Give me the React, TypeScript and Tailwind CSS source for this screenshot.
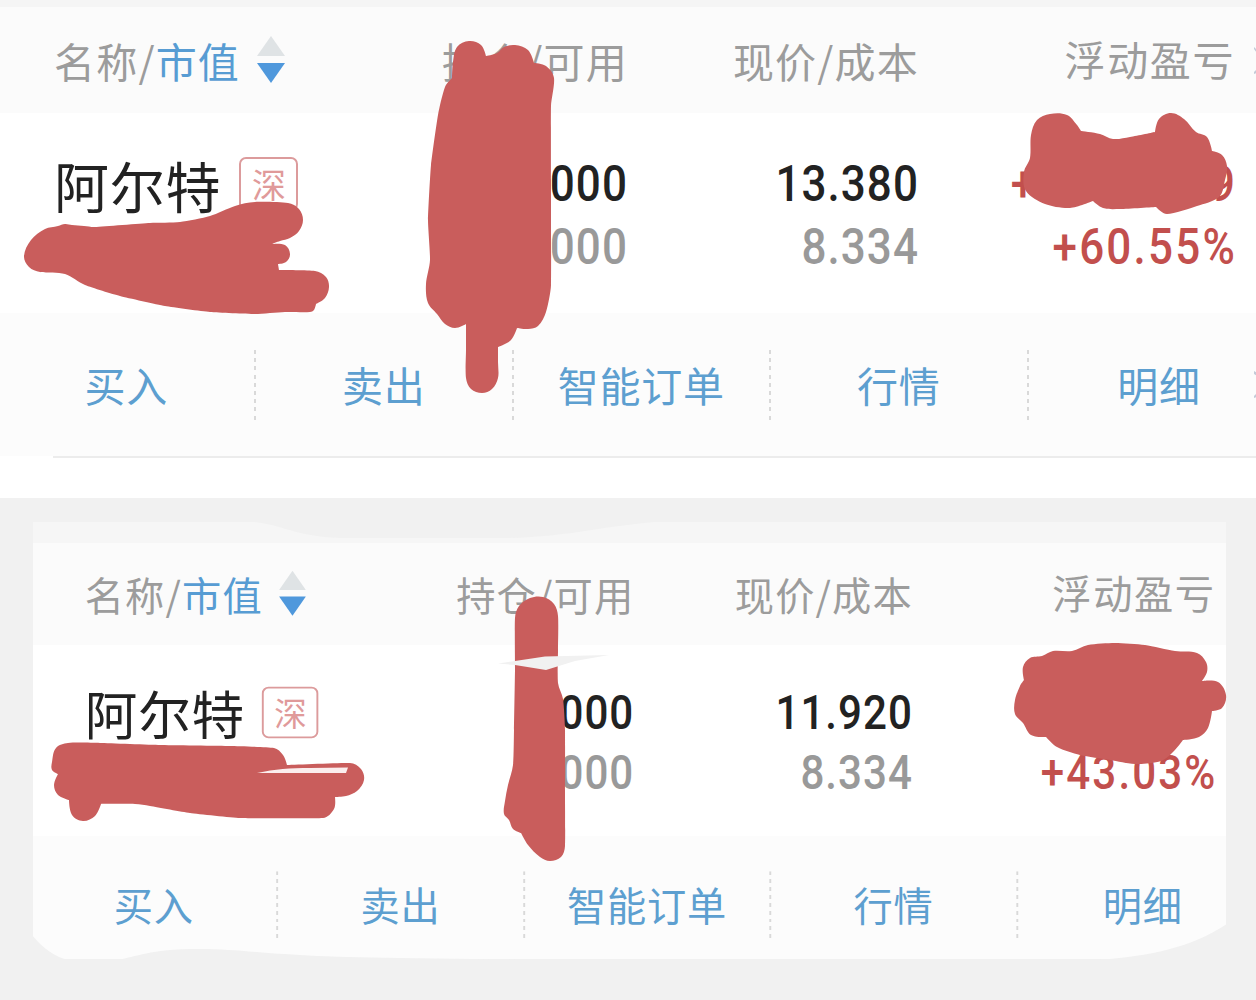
type Pt = [number, number];

/** Closed clockwise curve through the points: round outside, sharp in the inner notches. */
function blob(p: Pt[]) {
  const n = p.length;
  const at = (i: number) => p[(i + n) % n];
  const tangent = (i: number): Pt => {
    const [ax, ay] = at(i - 1);
    const [px, py] = at(i);
    const [bx, by] = at(i + 1);
    const turn = Math.atan2(
      (px - ax) * (by - py) - (py - ay) * (bx - px),
      (px - ax) * (bx - px) + (py - ay) * (by - py),
    );
    if (turn < -0.55) return [0, 0];
    const l = Math.hypot(bx - ax, by - ay) || 1;
    return [(bx - ax) / l, (by - ay) / l];
  };
  let d = `M${p[0][0]} ${p[0][1]}`;
  for (let i = 0; i < n; i++) {
    const b = at(i);
    const c = at(i + 1);
    const len = Math.hypot(c[0] - b[0], c[1] - b[1]);
    const h = Math.min(len * 0.34, 7);
    const t = tangent(i);
    const u = tangent(i + 1);
    d += `C${b[0] + t[0] * h} ${b[1] + t[1] * h} ${c[0] - u[0] * h} ${c[1] - u[1] * h} ${c[0]} ${c[1]}`;
  }
  return d + "Z";
}

const scribbles: Pt[][] = [
  [[24,256],[31,240],[45,229],[58,226],[65,224],[72,225],[84,226],[95,227],[150,223],[180,222],[210,216],[235,206],[255,202],[288,203],[299,209],[303,220],[299,231],[290,238],[280,241],[272,244],[285,245],[290,254],[286,262],[278,264],[279,270],[315,271],[326,277],[329,287],[325,298],[316,304],[314,310],[310,312],[285,312],[255,314],[210,312],[165,306],[120,296],[85,285],[65,274],[40,272],[29,267]],
  [[453,62],[457,47],[469,41],[481,45],[486,56],[497,53],[504,47],[515,45],[528,50],[534,63],[546,66],[554,78],[551,106],[551,180],[551,285],[546,312],[538,326],[528,329],[517,328],[511,340],[498,347],[498,362],[498,378],[492,389],[482,393],[471,389],[466,378],[466,350],[466,324],[455,328],[445,324],[437,314],[428,303],[426,284],[430,260],[428,220],[431,165],[438,115],[445,87],[452,78]],
  [[1030,158],[1031,135],[1037,120],[1050,114],[1067,115],[1077,125],[1081,131],[1100,134],[1113,139],[1130,137],[1155,132],[1159,119],[1171,113],[1184,119],[1196,132],[1207,137],[1212,151],[1222,155],[1227,166],[1225,180],[1219,197],[1197,206],[1167,214],[1156,207],[1120,209],[1103,208],[1093,201],[1070,208],[1045,204],[1026,191],[1024,172]],
  [[52,762],[56,748],[68,743],[100,743],[160,745],[230,746],[274,748],[283,755],[287,765],[350,763],[361,769],[364,780],[357,791],[346,796],[335,797],[334,809],[323,818],[240,818],[190,813],[150,806],[135,804],[101,804],[95,816],[83,821],[72,815],[69,800],[58,795],[54,785],[58,774],[52,770]],
  [[515,618],[519,606],[530,598],[543,597],[554,604],[558,616],[558,650],[558,683],[563,699],[565,730],[565,790],[565,846],[561,857],[550,861],[540,857],[528,845],[521,833],[513,829],[509,820],[504,814],[505,801],[508,785],[513,765],[514,730],[515,670]],
  [[1024,680],[1023,667],[1030,658],[1042,656],[1053,651],[1072,651],[1088,645],[1115,643],[1145,645],[1175,651],[1197,653],[1206,662],[1207,672],[1202,681],[1218,682],[1226,695],[1222,708],[1212,711],[1208,728],[1199,737],[1183,740],[1174,751],[1161,761],[1135,764],[1110,760],[1080,755],[1057,747],[1046,737],[1031,735],[1023,723],[1015,714],[1015,700],[1020,686]],
];

function Market() {
  return (
    <span className="-mt-[1px] ml-[18px] flex h-[54px] w-[59px] items-center justify-center rounded-[7px] border-2 border-[#dc9b9c] text-[34px] leading-none tracking-normal text-[#e09a9a]">
      深
    </span>
  );
}

function Sort() {
  return (
    <svg className="ml-[17px] h-[48px] w-[28px]" viewBox="0 0 28 48">
      <path d="M14 0L28 20H0Z" fill="#dfe3e5" />
      <path d="M0 27H28L14 47Z" fill="#4f98dc" />
    </svg>
  );
}

function Divider() {
  return (
    <i className="h-[70px] w-[2px] shrink-0 bg-[repeating-linear-gradient(to_bottom,#d9d9d9_0_4px,transparent_4px_8.2px)]" />
  );
}

const column = "-mr-[1px] text-right font-['Roboto'] text-[50px] font-medium leading-[63px] tracking-[1.2px]";
const num = "h-[63px] origin-right scale-x-[0.88] whitespace-nowrap";

function Panel({ price, percent, profit }: { price: string; percent: string; profit?: string[] }) {
  return (
    <section className="w-[1256px] overflow-hidden whitespace-nowrap">
      <div className="grid h-[106px] grid-cols-[400px_227px_291px_316px] items-center bg-[#fbfbfb] text-[41px] leading-none tracking-[1.2px] text-[#9c9c9c]">
        <div className="flex items-center pl-[54px]">
          <span>名称/</span>
          <span className="text-[#579cd3]">市值</span>
          <Sort />
        </div>
        <div className="-mr-[1px] text-right">持仓/可用</div>
        <div className="-mr-[1px] text-right">现价/成本</div>
        <div className="-mr-[1px] pb-[4px] text-right tracking-[1.6px]">浮动盈亏</div>
      </div>
      <div className="grid h-[200px] grid-cols-[400px_227px_291px_316px] bg-white pt-[40px]">
        <div className="-mt-[3px] flex h-[69px] items-center pl-[54px] text-[55px] leading-none tracking-[0.8px] text-[#222]">
          阿尔特
          <Market />
        </div>
        <div className={column}>
          <div className={`${num} text-[#222]`}>000</div>
          <div className={`${num} text-[#999]`}>000</div>
        </div>
        <div className={column}>
          <div className={`${num} text-[#222]`}>{price}</div>
          <div className={`${num} text-[#999]`}>8.334</div>
        </div>
        <div className={`${column} text-[#c24f4d]`}>
          <div className={`${num} -mr-[1px] flex justify-between pl-[62px]`}>
            {profit?.map((c) => <span key={c}>{c}</span>)}
          </div>
          <div className={`${num} -mr-[2px] tracking-[2.5px]`}>{percent}</div>
        </div>
      </div>
      <div className="-ml-[1.5px] flex h-[143px] items-center bg-[#fcfcfc] text-[41px] leading-none tracking-[0.8px] text-[#5d9fd0]">
        {["买入", "卖出", "智能订单", "行情", "明细"].map((t, i) => (
          <div key={t} className="flex w-[257.5px] shrink-0 items-center last:w-[261px]">
            <span className="grow pb-[1px] text-center">{t}</span>
            {i < 4 && <Divider />}
          </div>
        ))}
      </div>
    </section>
  );
}

export default function App() {
  return (
    <main className="relative h-[1000px] w-[1256px] overflow-hidden bg-white font-['Noto_Sans_CJK_SC',sans-serif] font-normal">
      <div className="h-[7px] bg-[#f5f5f5]" />
      <Panel price="13.380" percent="+60.55%" profit={["+", "9"]} />
      <div className="ml-[53px] h-[2px] bg-[#ececec]" />
      <div className="mt-[40px] h-[502px] bg-[#f1f1f1] pl-[33px] pt-[24px]">
        <div className="h-[437px] w-[1193px] overflow-hidden">
          <div className="h-[21px] bg-[#f6f6f6]" />
          <div className="w-[1256px] origin-top-left scale-[0.9575]">
            <Panel price="11.920" percent="+43.03%" />
          </div>
        </div>
      </div>
      <svg className="absolute inset-0 h-[1000px] w-[1256px]" viewBox="0 0 1256 1000">
        <g fill="#c95d5c">
          {scribbles.map((p, i) => (
            <path key={i} d={blob(p)} />
          ))}
        </g>
        <g fill="#c3cbd8">
          <path d="M1254 47L1257 50V53L1254 49ZM1257 69V73L1254 74V72Z" />
          <path d="M1254 371L1257 373V376L1254 374ZM1257 393V397L1254 398V396Z" />
        </g>
        <path d="M257 773C275 769 290 768 310 768L348 767.5L346 773Z" fill="#fbeeee" />
        <g fill="#f1f1f1">
          <path d="M498 663.5L515 661L545 656.5L609 655L575 661L546 670L515 665Z" />
          <path d="M240 521C285 522 290 538 350 538H500C570 538 600 525 670 521Z" />
          <path d="M32 935Q48 955 68 960H32Z" />
          <path d="M115 960C140 957 145 949 200 949C250 949 270 957 400 958L640 961H115Z" />
          <path d="M1098 960C1150 956 1190 948 1227 924V960Z" />
        </g>
      </svg>
    </main>
  );
}
